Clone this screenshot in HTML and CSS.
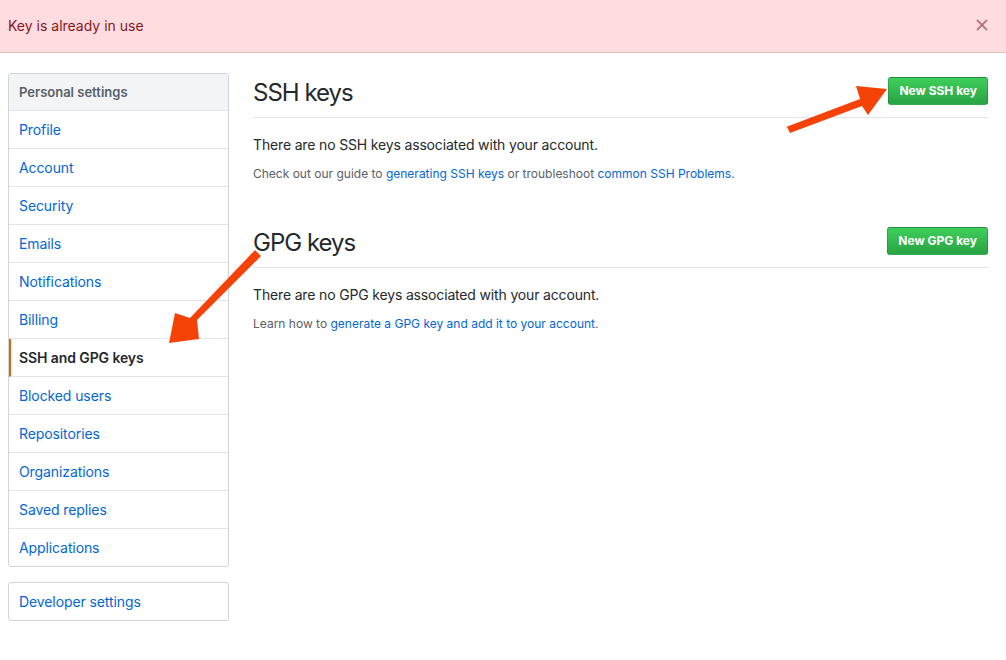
FILE: index.html
```html
<!DOCTYPE html>
<html lang="en">
<head>
<meta charset="utf-8">
<title>SSH and GPG keys</title>
<link rel="stylesheet" href="styles.css">
</head>
<body>
<div class="flash">
  <span class="flash-text">Key is already in use</span>
  <button class="flash-close" aria-label="Dismiss">
    <svg width="12" height="12" viewBox="0 0 12 12"><path d="M1.5 1.5 L10.5 10.5 M10.5 1.5 L1.5 10.5" stroke="currentColor" stroke-width="1.8" stroke-linecap="round"/></svg>
  </button>
</div>

<div class="page">
  <aside class="sidebar">
    <nav class="menu">
      <div class="menu-heading">Personal settings</div>
      <a class="menu-item">Profile</a>
      <a class="menu-item">Account</a>
      <a class="menu-item">Security</a>
      <a class="menu-item">Emails</a>
      <a class="menu-item">Notifications</a>
      <a class="menu-item">Billing</a>
      <a class="menu-item selected">SSH and GPG keys</a>
      <a class="menu-item">Blocked users</a>
      <a class="menu-item">Repositories</a>
      <a class="menu-item">Organizations</a>
      <a class="menu-item">Saved replies</a>
      <a class="menu-item">Applications</a>
    </nav>
    <nav class="menu">
      <a class="menu-item">Developer settings</a>
    </nav>
  </aside>

  <main class="main">
    <div class="subhead">
      <h2 class="subhead-heading">SSH keys</h2>
      <div class="subhead-actions"><a class="btn">New SSH key</a></div>
    </div>
    <p class="blank">There are no SSH keys associated with your account.</p>
    <p class="note">Check out our guide to <a class="link">generating SSH keys</a> or troubleshoot <a class="link">common SSH Problems</a>.</p>

    <div class="subhead spacious">
      <h2 class="subhead-heading">GPG keys</h2>
      <div class="subhead-actions"><a class="btn">New GPG key</a></div>
    </div>
    <p class="blank">There are no GPG keys associated with your account.</p>
    <p class="note">Learn how to <a class="link">generate a GPG key and add it to your account</a>.</p>
  </main>
</div>

<svg class="annot annot-ssh" width="110" height="60" viewBox="780 80 110 60">
  <polygon fill="#f54307" points="787,127 790,133 862,106 868,115 887,89 856,86 860,99 786,127"/>
</svg>
<svg class="annot annot-nav" width="100" height="100" viewBox="165 248 100 100">
  <polygon fill="#f54307" points="255,250 261,256 197,320 199,339 169,343 175,313 190,318"/>
</svg>
</body>
</html>
```

FILE: styles.css
```css
* { box-sizing: border-box; }

html, body {
  margin: 0;
  padding: 0;
  background: #fff;
}

body {
  font-family: Inter, "Liberation Sans", Arial, sans-serif;
  font-size: 14px;
  line-height: 1.5;
  color: #24292e;
  position: relative;
  width: 1006px;
  height: 660px;
  overflow: hidden;
}

.flash {
  display: flex;
  align-items: center;
  justify-content: space-between;
  height: 53px;
  padding: 0 17px 2px 8px;
  background: #ffdce0;
  border-bottom: 1px solid #e6bfc3;
  color: #86181d;
}

.flash-text {
  font-size: 14px;
}

.flash-close {
  display: flex;
  align-items: center;
  justify-content: center;
  padding: 0;
  border: 0;
  background: none;
  color: #b5767c;
  width: 14px;
  height: 14px;
}

.page {
  display: flex;
  gap: 24px;
  padding: 20px 18px 0 8px;
}

.sidebar {
  width: 221px;
  flex: none;
  display: flex;
  flex-direction: column;
  gap: 15px;
}

.menu {
  display: flex;
  flex-direction: column;
  border: 1px solid #d1d5da;
  border-radius: 3px;
  overflow: hidden;
}

.menu-heading {
  height: 37px;
  padding: 7px 10px;
  background: #f3f4f6;
  border-bottom: 1px solid #e1e4e8;
  font-weight: 600;
  font-size: 13px;
  color: #586069;
  line-height: 22px;
}

.menu-item {
  height: 38px;
  padding: 8px 10px;
  line-height: 21px;
  letter-spacing: -0.1px;
  color: #0366d6;
  border-bottom: 1px solid #e1e4e8;
  text-decoration: none;
}

.menu-item:last-child {
  border-bottom: 0;
  height: 37px;
}

.menu-item.selected {
  color: #24292e;
  font-weight: 600;
  border-left: 2px solid #e36209;
  padding-left: 8px;
}

.main {
  flex: 1;
  min-width: 0;
}

.subhead {
  display: flex;
  align-items: flex-start;
  padding-bottom: 8px;
  margin-bottom: 16px;
  border-bottom: 1px solid #e1e4e8;
}

.subhead.spacious {
  margin-top: 40px;
}

.subhead-heading {
  flex: 1;
  margin: 0;
  padding-top: 2px;
  height: 36px;
  font-size: 24px;
  font-weight: normal;
  line-height: 36px;
  letter-spacing: -1px;
}

.subhead-actions {
  margin: 4px 0 0 4px;
}

.btn {
  display: inline-block;
  padding: 3px 10px;
  font-size: 12px;
  font-weight: 700;
  line-height: 20px;
  color: #fff;
  background: linear-gradient(180deg, #3fcf5b 0%, #2aa745 90%);
  border: 1px solid rgba(27, 31, 35, 0.2);
  border-radius: 3px;
  text-decoration: none;
  white-space: nowrap;
}

.blank {
  margin: 0 0 10px;
  height: 21px;
  font-size: 14px;
  line-height: 21px;
  letter-spacing: -0.16px;
}

.note {
  margin: 0;
  font-size: 12px;
  line-height: 18px;
  color: #586069;
}

.link {
  color: #0366d6;
  text-decoration: none;
}

.annot {
  position: absolute;
  pointer-events: none;
}

.annot-ssh {
  left: 780px;
  top: 80px;
}

.annot-nav {
  left: 165px;
  top: 248px;
}
```
